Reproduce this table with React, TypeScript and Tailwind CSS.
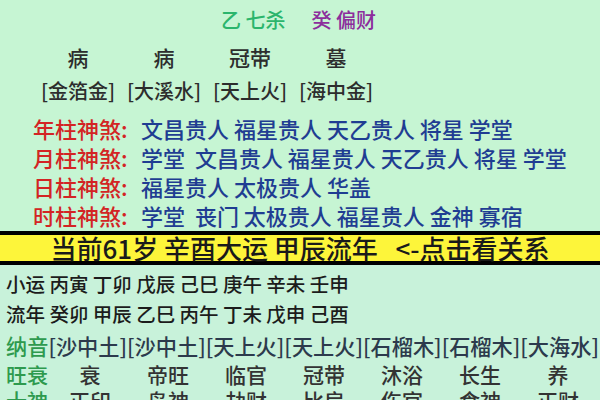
import React from "react";

const F = { fontFamily: '"Noto Sans CJK SC", "Noto Sans", sans-serif' };

export default function App() {
  const sha = [
    ["年柱神煞:", "文昌贵人 福星贵人 天乙贵人 将星 学堂"],
    ["月柱神煞:", "学堂  文昌贵人 福星贵人 天乙贵人 将星 学堂"],
    ["日柱神煞:", "福星贵人 太极贵人 华盖"],
    ["时柱神煞:", "学堂  丧门 太极贵人 福星贵人 金神 寡宿"],
  ];
  const wang = ["衰", "帝旺", "临官", "冠带", "沐浴", "长生", "养"];
  const shi = ["正印", "枭神", "劫财", "比肩", "伤官", "食神", "正财"];
  return (
    <div className="w-[600px] h-[400px] overflow-hidden flex flex-col font-medium" style={F}>
      <div className="bg-[#c6f5d3] flex flex-col">
        <div className="h-[40px] flex items-center pl-[221px] text-[20px] leading-none whitespace-pre">
          <span className="text-[#2bb56c]">乙 七杀</span>
          <span className="text-[#8c2d9c] ml-[26px]">癸 偏财</span>
        </div>
        <div className="h-[34px] grid grid-cols-[86px_86px_86px_86px] pl-[35px] items-center text-[21px] leading-none text-[#2d2d2d]">
          <span className="text-center">病</span>
          <span className="text-center">病</span>
          <span className="text-center">冠带</span>
          <span className="text-center">墓</span>
        </div>
        <div className="h-[33px] grid grid-cols-[86px_86px_86px_86px] pl-[35px] items-center text-[20px] leading-none text-[#2d2d2d]">
          <span className="text-center">[金箔金]</span>
          <span className="text-center">[大溪水]</span>
          <span className="text-center">[天上火]</span>
          <span className="text-center">[海中金]</span>
        </div>
        <div className="pt-[6px] pb-[2px] flex flex-col">
          {sha.map(([l, v]) => (
            <div key={l} className="h-[29px] flex items-center pl-[33px] text-[22px] leading-none whitespace-pre">
              <span className="text-[#d32424] w-[108px] shrink-0">{l}</span>
              <span className="text-[#1f3d92]">{v}</span>
            </div>
          ))}
        </div>
      </div>
      <div className="border-y-[4px] border-black bg-[#fdf53a] h-[36px] flex items-center justify-center text-[26px] leading-none text-[#1a1a1a] whitespace-pre">
        当前61岁 辛酉大运 甲辰流年   &lt;-点击看关系
      </div>
      <div className="bg-[#c8f2da] flex-1 flex flex-col pl-[6px]">
        <div className="h-[30px] mt-[4px] flex items-center text-[19.5px] leading-none text-[#1c1c1c] whitespace-pre">
          小运 丙寅 丁卯 戊辰 己巳 庚午 辛未 壬申
        </div>
        <div className="h-[30px] flex items-center text-[19.5px] leading-none text-[#1c1c1c] whitespace-pre">
          流年 癸卯 甲辰 乙巳 丙午 丁未 戊申 己酉
        </div>
        <div className="h-[33px] flex items-center text-[21.2px] leading-none text-[#2c3a4c] whitespace-pre">
          <span className="text-[#2e9a4e]">纳音</span>
          [沙中土][沙中土][天上火][天上火][石榴木][石榴木][大海水]
        </div>
        <div className="h-[24px] grid grid-cols-[45px_repeat(7,78px)] items-center text-[21px] leading-none text-[#333]">
          <span className="text-[#2e9a4e]">旺衰</span>
          {wang.map((w, i) => (
            <span key={i} className="text-center">{w}</span>
          ))}
        </div>
        <div className="h-[28px] grid grid-cols-[45px_repeat(7,78px)] items-center text-[21px] leading-none text-[#333]">
          <span className="text-[#2e9a4e]">十神</span>
          {shi.map((w, i) => (
            <span key={i} className="text-center">{w}</span>
          ))}
        </div>
      </div>
    </div>
  );
}
